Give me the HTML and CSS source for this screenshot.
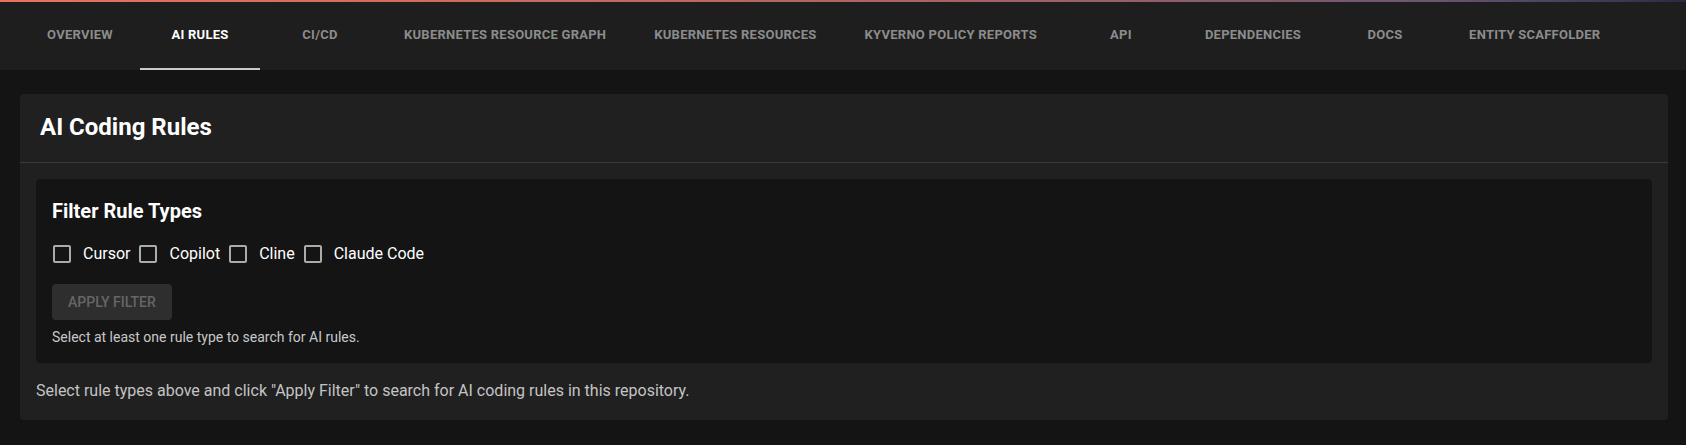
FILE: index.html
```html
<!DOCTYPE html>
<html lang="en">
<head>
<meta charset="utf-8">
<title>AI Rules</title>
<link rel="stylesheet" href="styles.css">
</head>
<body>
<div class="header-strip"></div>
<nav class="tabs">
  <div class="tab">Overview</div>
  <div class="tab active">AI Rules</div>
  <div class="tab">CI/CD</div>
  <div class="tab">Kubernetes Resource Graph</div>
  <div class="tab">Kubernetes Resources</div>
  <div class="tab">Kyverno Policy Reports</div>
  <div class="tab">API</div>
  <div class="tab">Dependencies</div>
  <div class="tab">Docs</div>
  <div class="tab">Entity Scaffolder</div>
</nav>
<main class="content">
  <section class="card">
    <header class="card-header">
      <h2 class="card-title">AI Coding Rules</h2>
    </header>
    <div class="card-body">
      <div class="filter-box">
        <h3 class="filter-title">Filter Rule Types</h3>
        <div class="checks">
          <label class="check"><span class="check-icon"><svg viewBox="0 0 24 24" width="24" height="24"><path d="M19 5v14H5V5h14m0-2H5c-1.1 0-2 .9-2 2v14c0 1.1.9 2 2 2h14c1.1 0 2-.9 2-2V5c0-1.1-.9-2-2-2z"/></svg></span><span class="check-label">Cursor</span></label>
          <label class="check"><span class="check-icon"><svg viewBox="0 0 24 24" width="24" height="24"><path d="M19 5v14H5V5h14m0-2H5c-1.1 0-2 .9-2 2v14c0 1.1.9 2 2 2h14c1.1 0 2-.9 2-2V5c0-1.1-.9-2-2-2z"/></svg></span><span class="check-label">Copilot</span></label>
          <label class="check"><span class="check-icon"><svg viewBox="0 0 24 24" width="24" height="24"><path d="M19 5v14H5V5h14m0-2H5c-1.1 0-2 .9-2 2v14c0 1.1.9 2 2 2h14c1.1 0 2-.9 2-2V5c0-1.1-.9-2-2-2z"/></svg></span><span class="check-label">Cline</span></label>
          <label class="check"><span class="check-icon"><svg viewBox="0 0 24 24" width="24" height="24"><path d="M19 5v14H5V5h14m0-2H5c-1.1 0-2 .9-2 2v14c0 1.1.9 2 2 2h14c1.1 0 2-.9 2-2V5c0-1.1-.9-2-2-2z"/></svg></span><span class="check-label">Claude Code</span></label>
        </div>
        <button class="apply-btn" disabled>Apply Filter</button>
        <p class="helper">Select at least one rule type to search for AI rules.</p>
      </div>
      <p class="hint">Select rule types above and click "Apply Filter" to search for AI coding rules in this repository.</p>
    </div>
  </section>
</main>
</body>
</html>
```

FILE: styles.css
```css
* { box-sizing: border-box; }
html, body {
  margin: 0;
  padding: 0;
  background: #141414;
  font-family: Roboto, "Liberation Sans", sans-serif;
  color: #fff;
}
.header-strip {
  height: 2px;
  background: linear-gradient(90deg, #e8735d 0%, #c56a5e 35%, #9a6068 65%, #6a5670 85%, #3a3a52 96%, #2a2a40 100%);
}
.tabs {
  display: flex;
  height: 68px;
  padding-left: 20px;
  background: #1e1e1e;
}
.tab {
  display: flex;
  align-items: center;
  justify-content: center;
  min-width: 120px;
  padding: 0 24px 4px;
  font-size: 13px;
  font-weight: 700;
  letter-spacing: 0.25px;
  text-transform: uppercase;
  color: #8c8c8c;
  white-space: nowrap;
}
.tab.active {
  color: #fff;
  box-shadow: inset 0 -2px 0 #cacad2;
}
.content {
  padding: 24px 18px 0 20px;
}
.card {
  background: #202020;
  border-radius: 4px;
}
.card-header {
  padding: 17px 20px 19px;
  border-bottom: 1px solid #3a3a3a;
}
.card-title {
  margin: 0;
  font-size: 24px;
  line-height: 32px;
  font-weight: 700;
}
.card-body {
  padding: 16px 16px 17px;
}
.filter-box {
  background: #141414;
  border-radius: 4px;
  padding: 16px;
}
.filter-title {
  margin: 0 0 6px;
  font-size: 20px;
  line-height: 32px;
  font-weight: 700;
}
.checks {
  display: flex;
  align-items: center;
  height: 42px;
  margin-left: -11px;
}
.check {
  display: flex;
  align-items: center;
  margin-right: -3px;
}
.check:last-child { margin-right: 0; }
.check-icon {
  display: flex;
  padding: 9px;
}
.check-icon svg { fill: #ababab; }
.check-label {
  font-size: 16px;
  line-height: 24px;
}
.apply-btn {
  display: block;
  margin-top: 9px;
  height: 36px;
  padding: 0 16px;
  border: 0;
  border-radius: 4px;
  background: #2e2e2e;
  color: #666;
  font-family: inherit;
  font-size: 14px;
  font-weight: 500;
  letter-spacing: 0;
  text-transform: uppercase;
}
.helper {
  margin: 7px 0 0;
  font-size: 14px;
  line-height: 20px;
  color: #c8c8c8;
}
.hint {
  margin: 16px 0 0;
  font-size: 16px;
  line-height: 24px;
  color: #c4c4c4;
}
```
